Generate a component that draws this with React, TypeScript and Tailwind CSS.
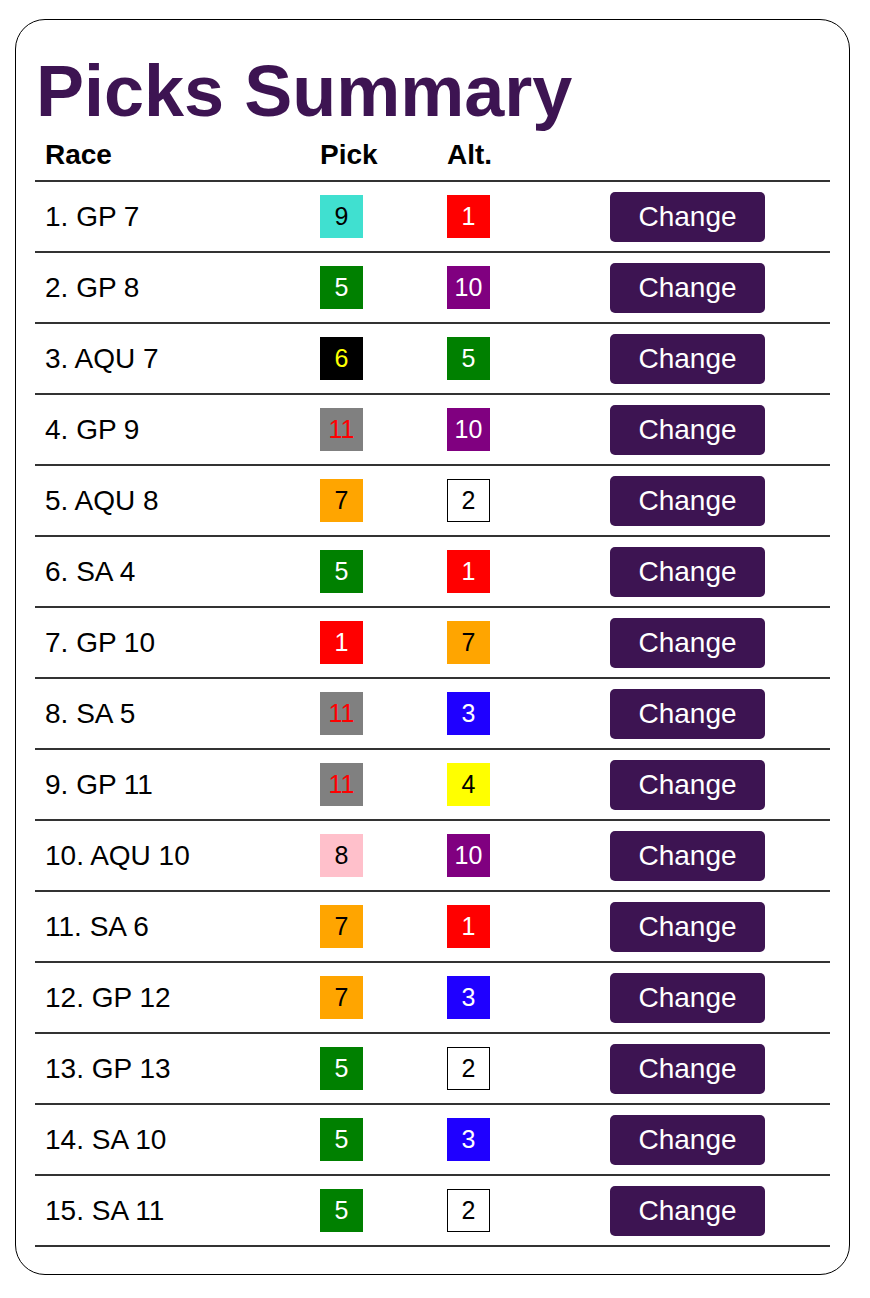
const swatch: Record<string, string> = {
  "1": "bg-[#ff0000] text-white",
  "2": "bg-white text-black border border-black",
  "3": "bg-[#1f00ff] text-white",
  "4": "bg-[#ffff00] text-black",
  "5": "bg-[#008000] text-white",
  "6": "bg-black text-[#ffff00]",
  "7": "bg-[#ffa500] text-black",
  "8": "bg-[#ffc0cb] text-black",
  "9": "bg-[#40e0d0] text-black",
  "10": "bg-[#800080] text-white",
  "11": "bg-[#808080] text-[#ff0000]",
};

const picks = [
  { race: "1. GP 7", pick: "9", alt: "1" },
  { race: "2. GP 8", pick: "5", alt: "10" },
  { race: "3. AQU 7", pick: "6", alt: "5" },
  { race: "4. GP 9", pick: "11", alt: "10" },
  { race: "5. AQU 8", pick: "7", alt: "2" },
  { race: "6. SA 4", pick: "5", alt: "1" },
  { race: "7. GP 10", pick: "1", alt: "7" },
  { race: "8. SA 5", pick: "11", alt: "3" },
  { race: "9. GP 11", pick: "11", alt: "4" },
  { race: "10. AQU 10", pick: "8", alt: "10" },
  { race: "11. SA 6", pick: "7", alt: "1" },
  { race: "12. GP 12", pick: "7", alt: "3" },
  { race: "13. GP 13", pick: "5", alt: "2" },
  { race: "14. SA 10", pick: "5", alt: "3" },
  { race: "15. SA 11", pick: "5", alt: "2" },
];

function Swatch({ n }: { n: string }) {
  return (
    <span className={`w-[43px] h-[43px] flex items-center justify-center text-[25px] leading-none ${swatch[n]}`}>
      {n}
    </span>
  );
}

export default function App() {
  return (
    <div className="bg-white min-h-[1298px] pt-[19px] pl-[15px]" style={{ fontFamily: '"Liberation Sans", Arial, sans-serif' }}>
      <div className="w-[835px] border border-black rounded-[30px] px-[19px] pt-[35px] pb-[27px]">
        {/* Title */}
        <h1 className="text-[72px] leading-none font-bold text-[#3d1452] pl-[1px]">Picks Summary</h1>

        {/* Table */}
        <div className="text-[28px] text-black">
          <div className="grid grid-cols-[275px_127px_163px_1fr] h-[55px] items-end pb-[11px] border-b-2 border-[#333] font-bold leading-none">
            <span className="pl-[10px]">Race</span>
            <span className="pl-[10px]">Pick</span>
            <span className="pl-[10px]">Alt.</span>
            <span />
          </div>
          {picks.map((p) => (
            <div
              key={p.race}
              className="grid grid-cols-[275px_127px_163px_1fr] h-[71px] items-center border-b-2 border-[#333]"
            >
              <span className="pl-[10px] leading-none">{p.race}</span>
              <span className="pl-[10px]"><Swatch n={p.pick} /></span>
              <span className="pl-[10px]"><Swatch n={p.alt} /></span>
              <span className="pl-[10px]">
                <button className="w-[155px] h-[50px] rounded-[5px] bg-[#3d1452] text-white text-[28px] leading-none">
                  Change
                </button>
              </span>
            </div>
          ))}
        </div>
      </div>
    </div>
  );
}
